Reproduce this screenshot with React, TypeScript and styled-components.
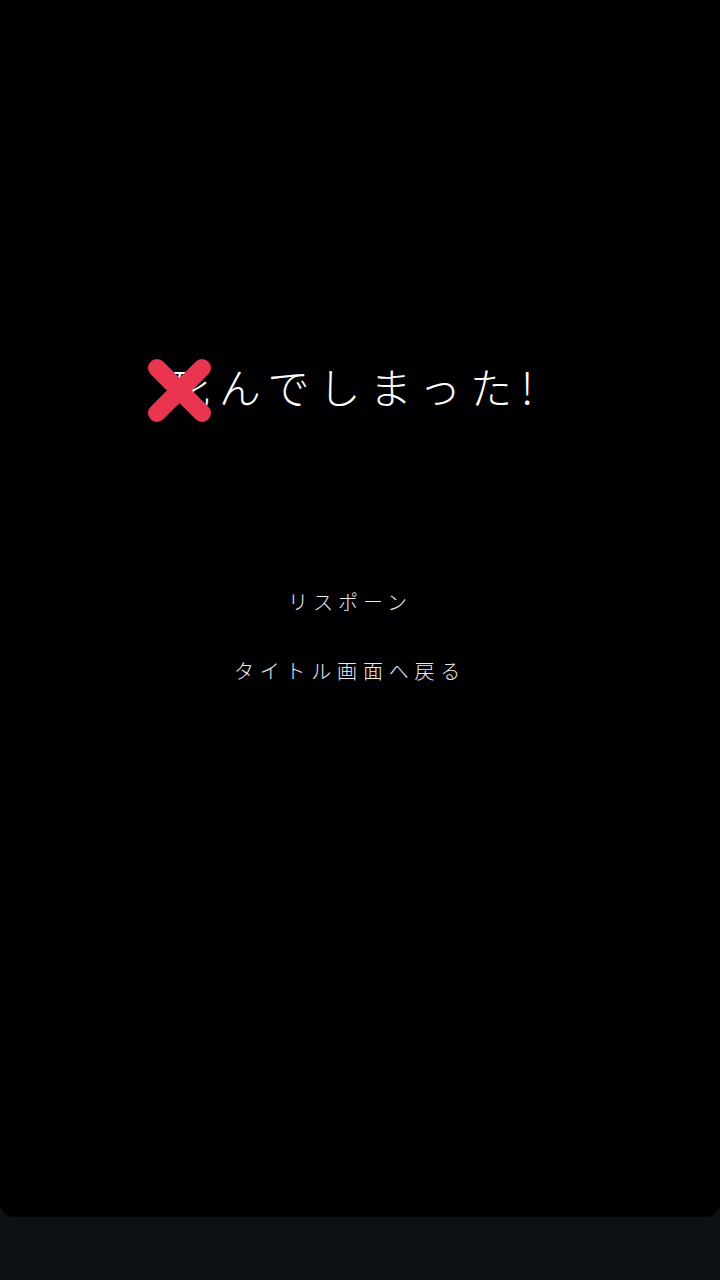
import React from "react";
import styled, { createGlobalStyle } from "styled-components";

const Global = createGlobalStyle`
  html, body {
    margin: 0;
    padding: 0;
    background: #0c1115;
  }
  body {
    font-family: "Noto Sans CJK JP", "Noto Sans", sans-serif;
  }
`;

const Page = styled.div`
  width: 720px;
  height: 1280px;
  background: #0c1115;
  display: flex;
  flex-direction: column;
`;

const Screen = styled.div`
  height: 1217px;
  background: #010103;
  border-radius: 0 0 14px 14px;
  display: flex;
  flex-direction: column;
  align-items: center;
`;

const Title = styled.h1`
  margin: 359px 0 0 0;
  font-family: "Noto Sans CJK JP", sans-serif;
  font-weight: 300;
  font-size: 42px;
  line-height: 54px;
  letter-spacing: 9px;
  color: #ffffff;
  position: relative;
  padding-right: 10px;
`;

const FirstChar = styled.span`
  position: relative;
  display: inline-block;
`;

const Cross = styled.svg`
  position: absolute;
  left: -21px;
  top: -2px;
  width: 66px;
  height: 66px;
`;

const Menu = styled.nav`
  margin-top: 174px;
  display: flex;
  flex-direction: column;
  align-items: center;
  gap: 40px;
  padding-right: 20px;
`;

const MenuItem = styled.div<{ $wide?: boolean }>`
  font-family: "Noto Sans CJK JP", sans-serif;
  font-weight: 300;
  font-size: 20px;
  line-height: 29px;
  letter-spacing: ${(p) => (p.$wide ? "5.8px" : "5px")};
  color: #ececec;
`;

export default function App() {
  return (
    <>
      <Global />
      <Page>
        <Screen>
          <Title>
            <FirstChar>
              死
              <Cross viewBox="0 0 66 66">
                <path
                  d="M10 11 L55 56 M55 11 L10 56"
                  stroke="#ea3550"
                  strokeWidth="18"
                  strokeLinecap="round"
                  fill="none"
                />
              </Cross>
            </FirstChar>
            んでしまった!
          </Title>
          <Menu>
            <MenuItem>リスポーン</MenuItem>
            <MenuItem $wide>タイトル画面へ戻る</MenuItem>
          </Menu>
        </Screen>
      </Page>
    </>
  );
}
